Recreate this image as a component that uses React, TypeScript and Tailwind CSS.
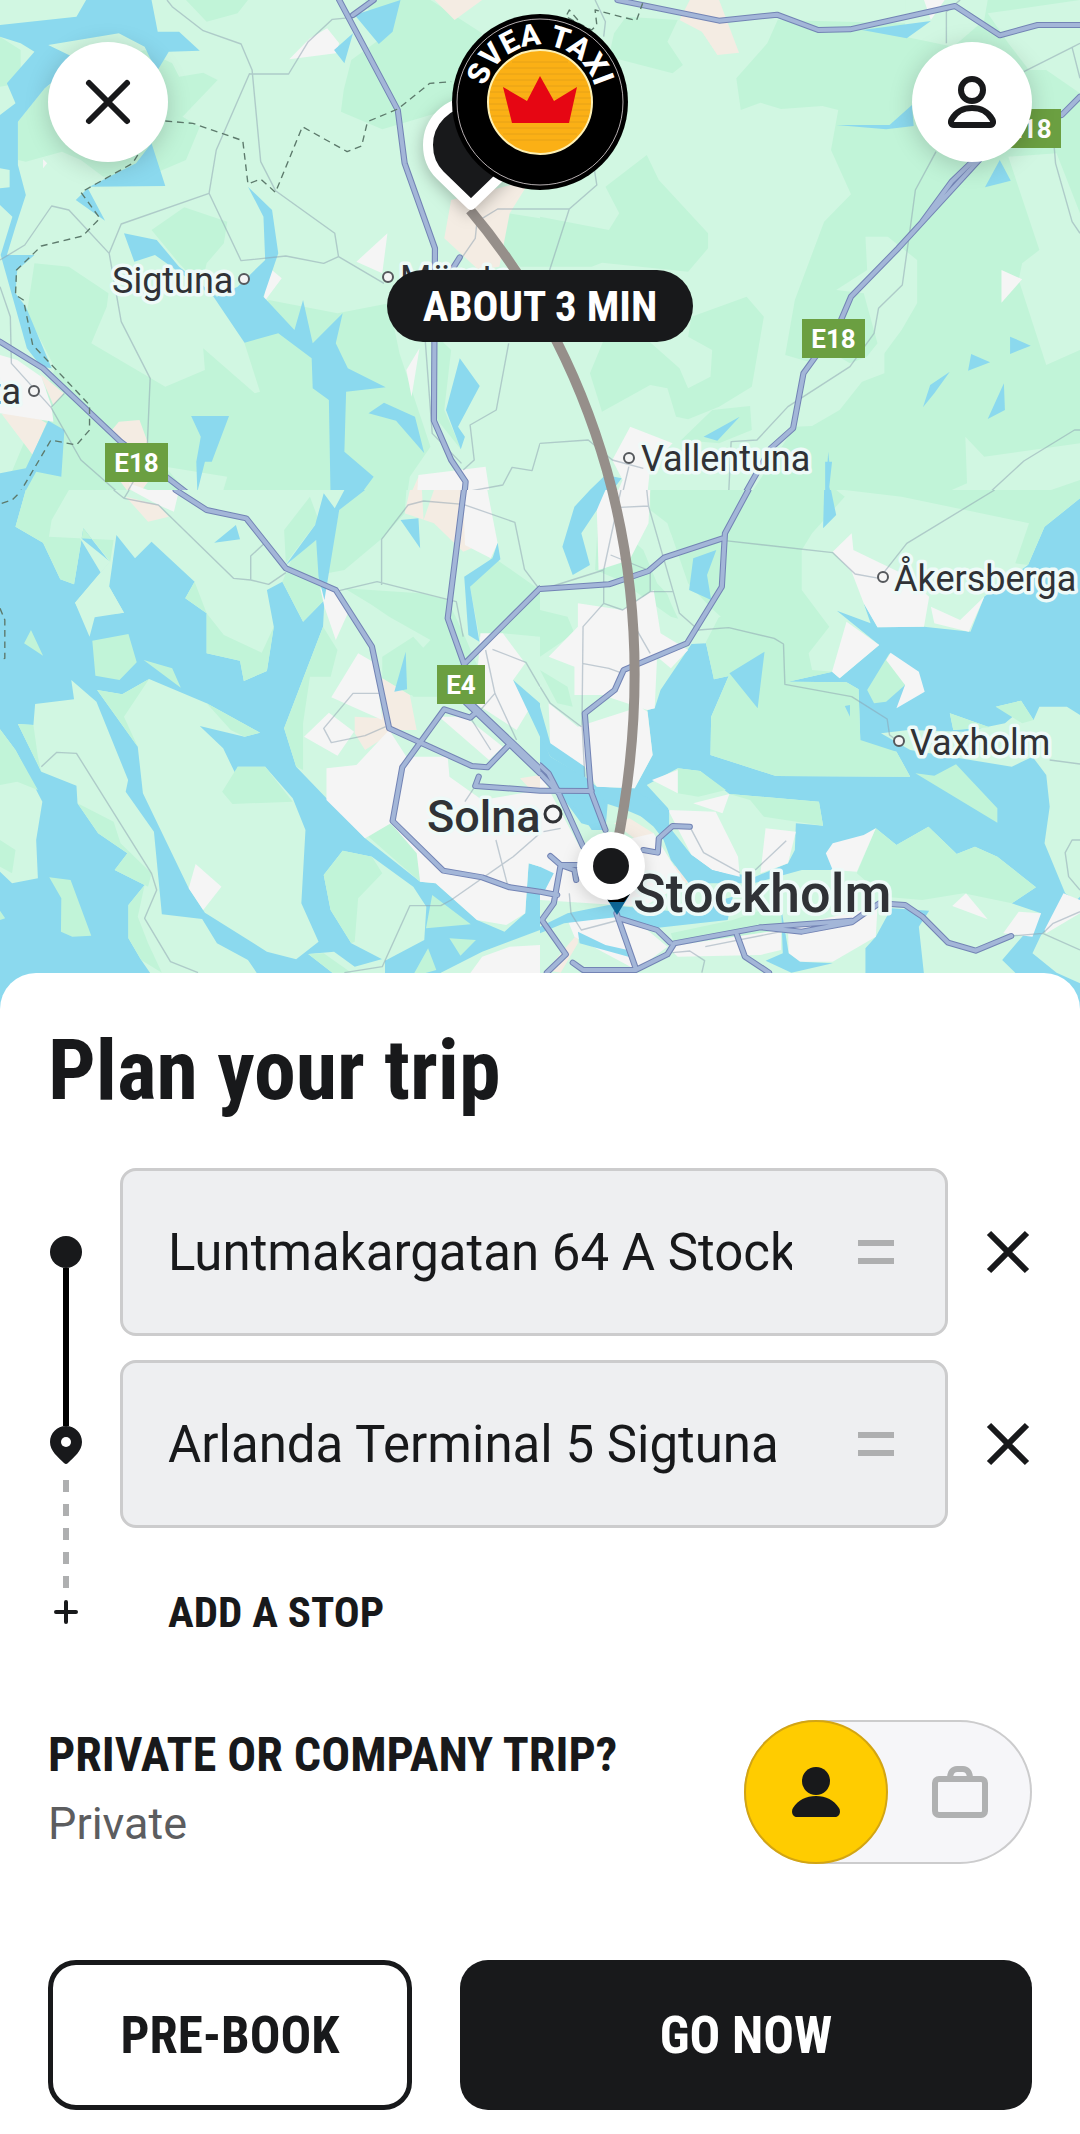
import { useState } from 'react'

type Tile = {
  x: number
  y: number
  base: string
  land?: string
  forest: string
  field?: string
  urban: string
  sand: string
  water: string
  minor: string
  major: string
  border?: string
}

const colors = {
  water: '#8bd9ee',
  land: '#d1f7e2',
  forest: '#c1f4d8',
  urban: '#f5f5f5',
  sand: '#f4ece3',
  road: '#a3b6d8',
  roadEdge: '#7384b5',
}

// Every tile is 540x500 on the map and has its own 1568x1500 grid
const tiles: Tile[] = [
  {
    x: 0,
    y: 0,
    base: colors.land,
    forest:
      'M52 365L130 265L200 220L420 150L500 190L520 230L590 218L632 240L530 350L580 380L540 480L450 520L300 530L235 480L180 455L75 485L52 480Z M0 110L60 150L60 250L0 260Z M540 0L720 0L690 40L600 65Z M1060 0L1250 0L1400 100L1330 320L1110 388L990 335L998 270L1020 180L1100 120Z M440 690L535 622L660 665L650 730L600 790L585 860L520 790Z M100 790L200 800L315 880L310 920L265 1030L480 1160L595 1110L590 1045L740 1180L755 1175L710 1030L780 900L980 940L1130 910L1160 1060L1250 1340L1190 1430L1180 1500L640 1500L660 1430L740 1390L720 1290L780 1238L870 1295L930 1295L955 1410L900 1500L0 1500L160 1105L78 940Z M1475 640L1568 655L1568 800L1510 800L1460 740Z M1270 1010L1310 1050L1290 1230L1340 1350L1270 1260Z',
    field: 'M480 1400L660 1430L640 1500L560 1500Z',
    urban:
      'M840 178L900 115L950 85L985 130L975 160Z M1125 700L1110 820L1035 785Z M778 800L818 835L765 908Z M1218 1045L1195 1190L1180 1110Z M0 1065L50 1080L120 1130L150 1220L155 1265L0 1240Z M125 478L137 490L125 505Z M1215 1425L1410 1400L1425 1500L1210 1500Z M375 1450L510 1500L390 1500Z',
    sand: 'M5 1242L75 1230L135 1270L95 1365Z M115 1120L185 1180L155 1215Z M325 1290L345 1265L405 1260L430 1330L340 1330Z M350 1445L430 1445L390 1500Z M1310 600L1540 540L1480 640L1450 800L1390 810L1290 715Z M1185 1500L1215 1430L1300 1430L1230 1500Z M1262 0L1320 60L1400 0Z',
    water:
      'M0 75L222 50L250 0L440 0L458 95L520 95L580 152L490 155L455 215L420 140L345 100L140 135L230 180L130 265L52 365L52 495L75 585L45 680L20 765L100 765L50 810L45 880L75 920L150 1105L120 1100L78 1045L2 765L36 650L0 615L0 565L28 562L28 510L0 505L0 345L45 310L20 250L100 155L60 130L0 110Z M440 430L480 558L260 560L395 490Z M220 600L255 565L305 662Z M360 700L455 720L520 800L630 890L690 860L770 780L765 650L720 560L790 630L808 760L765 890L855 990L880 900L908 1030L995 940L975 1030L1010 1105L1120 1162L1005 1175L1000 1355L1085 1430L1035 1500L960 1500L955 1200L908 1165L905 1075L808 1000L710 1028L620 890L450 765L390 785Z M555 1248L665 1248L615 1385L595 1385L573 1475L570 1385L583 1310Z M1335 1075L1393 1158L1330 1280L1350 1310L1338 1348L1295 1230Z M1070 1240L1115 1208L1205 1250L1232 1360L1150 1262Z M140 1262L187 1290L178 1430L105 1415L60 1500L0 1500L0 1420L75 1405Z M1030 45L1163 0L1140 95L1100 132Z M1025 100L1000 190L970 150Z',
    minor:
      'M485 0L500 20L590 92L700 132L732 210L757 485L800 572L972 700L983 770L1115 850 M725 222L838 222L895 125L965 58L1025 52 M725 220L628 450L607 580L352 672L317 760L200 630L150 618L72 735L0 780 M607 580L700 782L830 768L940 790L983 770 M317 760L352 965L436 1135L428 1330 M0 860L30 950L33 1090L148 1222L235 1380L360 1493L390 1440 M148 1222L187 1180 M1568 627L1445 627L1385 665L1380 715L1340 775 M1477 1030L1441 1230L1365 1275L1377 1380L1345 1410 M1568 1330L1545 1412L1487 1402L1460 1455L1355 1475 M1235 1025L1255 1300L1340 1390',
    major: 'M985 0L1155 330L1175 490L1263 745L1260 1262L1310 1380L1352 1445L1347 1500 M0 1025L125 1105L350 1325L570 1500 M1025 45L1085 0 M1335 772L1300 830',
    border:
      'M480 363L560 370L705 422L720 552L757 537L800 577L878 380L1008 455L1050 438L1067 365L1155 327L1248 250L1310 245 M400 465L385 490L235 577L290 655L240 708L120 738L48 810L45 885L68 900L95 1035L260 1215L260 1290L222 1335L148 1320L45 1500',
  },
  {
    x: 540,
    y: 0,
    base: colors.land,
    forest:
      'M250 50L400 60L370 125L415 195L385 220L200 170L215 100Z M690 60L1060 70L1060 0L1568 0L1568 1500L600 1500L740 1280L790 1278L870 1230L935 1145L1000 1120L1000 1050L900 1090L850 1060L780 1085L712 1065L740 900L825 665L903 583L845 450L866 330L820 318L700 327L640 308L583 330L570 235L660 130Z M310 465L190 560L230 640L200 690L0 650L0 800L150 800L180 788L430 815L488 745L488 700L345 540Z M600 890L650 950L615 1160L520 1220L430 1258L395 1250L370 1165L320 1155L180 1235L145 1120L185 1020L290 1000L405 1105L430 1165L495 1130L500 1050L430 1010L440 950Z M410 1320L500 1230L610 1218L615 1290L520 1330Z',
    field:
      'M1300 40L1568 0L1568 280L1470 210L1420 210L1360 130Z M1060 0L1300 0L1290 60L1200 140L1060 110Z M1360 470L1450 750L1400 790L1390 840L1470 1095L1568 1050L1568 640L1500 460Z M945 710L1010 710L1095 780L1095 910L1050 990L1000 1060L935 1145L880 1160L980 1030L940 880L860 870L950 810Z M1235 1310L1290 1370L1568 1330L1568 1440L1400 1500L1130 1500L1240 1450Z M860 1500L1000 1470L1040 1500Z',
    urban: 'M262 1280L385 1330L320 1400L310 1500L215 1500L240 1440L210 1380Z M1340 810L1400 838L1340 908Z M1115 0L1175 0L1135 60Z',
    sand: 'M435 0L520 0L578 158L515 165L470 95L405 60Z',
    water:
      'M935 90L1135 63L1065 115Z M860 375L1015 375L1080 315L1085 378L1005 388Z M1335 480L1367 542L1292 562Z M1365 1010L1425 1037L1365 1062Z M1252 1062L1307 1087L1243 1112Z M1190 1115L1145 1180L1112 1222L1133 1155Z M1347 1150L1350 1230L1300 1257Z M475 1310L580 1250L515 1322Z M115 1500L190 1425L237 1435L190 1500Z M837 1355L840 1385L848 1385L840 1460L848 1500L828 1500L828 1385L835 1385Z',
    minor:
      'M160 0L190 65L185 110 M0 627L85 627L165 555L158 510 M85 627L28 810 M1150 455L1090 570L1073 700L1052 855L983 925L970 1000L900 1100L720 1220L630 1320L555 1325L547 1500 M1220 0L1180 35V130 M1405 215L1545 142L1568 130 M1545 142L1568 235 M1493 440L1497 490L1545 665L1568 700 M0 1330L140 1320L210 1380L300 1405 M258 1400L235 1500 M1568 1290L1552 1290L1405 1383L1308 1475L1270 1500',
    major:
      'M225 0L520 62L688 44L808 90L900 88L1205 18L1335 106L1445 75L1568 75 M1568 290L1515 345 M1275 480L1040 745L903 890L870 970L765 1120L735 1285L670 1345L585 1500 M1260 480L1195 545L1110 665',
    border: 'M110 60L85 30L75 50L150 90L165 75L160 30L280 62L298 10',
  },
  {
    x: 0,
    y: 490,
    base: colors.water,
    land: 'M75 0L45 110L125 158L175 268L215 283L242 115L318 215L218 338L260 440L275 382L360 368L317 290L338 135L392 205L440 155L565 275L538 325L600 370L600 490L697 512L708 573L775 543L795 410L775 300L820 275L880 395L942 330L938 410L825 715L860 830L1060 1045L1220 1175L1265 1180L1385 1290L1465 1325L1525 1270L1535 1120L1568 1130L1568 0Z M282 600L355 613L433 567L600 640L755 728L710 740L580 708L648 775L690 865L690 830L770 830L850 925L887 1020L875 1240L925 1355L860 1408L775 1385L595 1268L548 1195L415 910L400 770Z M207 570L280 635L372 870L365 905L447 1025L470 1273L587 1287L630 1360L720 1410L745 1448V1500H470L410 1410L373 1345L373 1245L420 1185L333 1140L370 1090L285 1030L225 940L222 887L120 845L52 702L97 705L102 642L215 628Z M0 718L45 780L123 935L105 1050L110 1165L35 1180L0 1145Z M940 1155L995 1082L1080 1100L1200 1190L1238 1250L1232 1350L1118 1412L1020 1360L960 1260Z M895 1392L970 1385L1030 1430L1118 1405L1118 1500L1000 1500L965 1448Z M1280 1448L1400 1385L1568 1320V1500H1280Z',
    forest:
      'M75 0L200 0L150 90L142 140L330 150L320 215L242 115L215 283L175 268L125 158L45 110Z M1050 0L1180 0L1175 70L1110 145L1000 240L950 250L985 60Z M918 150L942 330L880 395L820 275L850 200Z M900 20L925 90L830 220L825 120Z M1000 295L1220 310L1300 330L1350 440L1400 560L1280 620L1200 620L1150 560L1250 450L1130 380L1080 345Z M1110 500L1200 440L1270 520L1270 620L1190 615L1110 565Z M1365 290L1430 200L1568 300L1568 440L1460 430L1392 440Z M938 410L980 480L960 560L900 560L880 700L880 840L860 830L825 715Z M690 830L770 830L850 935L675 942L645 905Z M538 325L565 275L600 370L650 435L760 488L795 410L775 543L708 573L697 512L600 490L600 370Z M282 600L355 613L433 567L360 680L400 770Z M600 640L755 728L710 740L670 720Z M940 1155L995 1082L1080 1100L1110 1150L1040 1225L1030 1355L1020 1360L960 1260Z M420 1185L400 1280L430 1360L470 1448L410 1410L373 1345L373 1245Z M225 940L330 995L350 1060L440 1150L430 1190L333 1140L370 1090L285 1030Z M0 718L45 780L110 900L50 875L0 885Z M0 1050L45 1080L35 1150L0 1130Z M52 702L97 705L110 800L120 845Z M70 460L90 420L125 497Z M268 452L373 432L397 517L347 570L277 557Z M417 510L500 535L525 593Z M143 1162L205 1170L265 1337L210 1340L177 1325L178 1225Z M0 1262L15 1285L0 1290Z M1255 1215L1367 1303L1237 1315Z M1305 1345L1382 1350L1337 1397Z M1243 1375L1267 1440L1197 1460Z M895 1392L940 1390L1020 1448L965 1448Z M1070 1040L1130 1000L1215 1080L1220 1175Z',
    field: 'M230 140L320 215L218 338L240 380L360 368L317 290Z',
    urban:
      'M380 0L520 0L505 65L460 45Z M1345 0L1415 0L1445 160L1425 205L1350 165Z M930 295L985 295L1010 370L975 450L942 350Z M1040 490L1090 520L1110 690L962 622Z M955 668L1028 725L980 797L883 740Z M948 835L1035 825L1130 720L1180 800L1300 800L1305 860L1400 930L1568 900L1568 1130L1535 1120L1525 1270L1470 1305L1385 1290L1265 1180L1220 1175L1210 1090L1135 1000L1060 1045L948 930Z M1275 680L1350 680L1460 770L1420 810Z M1395 430L1460 430L1525 520L1490 570L1535 660L1500 720L1380 640Z M548 1195L568 1122L643 1190L590 1260Z M1568 1365V1500H1330L1400 1400L1480 1370Z',
    sand: 'M365 20L460 45L490 80L430 95Z M1190 0L1225 0L1230 90L1260 0L1350 0L1350 110L1380 170L1345 185L1310 150L1260 100L1175 70Z M1110 565L1190 615L1210 720L1150 720L1060 780L1030 730L1030 680L1110 685Z M1510 865L1568 855V930Z M1380 1030L1450 1060L1440 1115L1400 1090Z',
    water:
      'M940 10L972 55L1000 0L1060 0L985 60L942 330L925 260L918 150L830 225L915 105Z M1163 90L1215 85L1220 175Z M685 105L697 148L622 158Z M1178 485L1182 598L1145 605Z M1445 158L1453 208L1365 290L1392 455L1360 435L1348 260L1430 205Z M1490 570L1568 640V740Z',
    minor:
      'M330 0L360 25L460 45L678 265L728 270L780 283L830 248 M728 270V198L768 160 M360 25L375 0 M985 302L1095 275L1325 335L1345 440 M1108 285V148L1185 45L1230 33L1345 43L1495 97L1523 238L1568 300 M120 830L165 787L222 790L440 1150L455 1200L420 1285L495 1415L575 1448 M1100 610H1025L940 715L962 758L1060 737L1120 710 M1410 480L1437 610L1500 750 M1430 478L1527 517L1568 590 M1437 610L1370 690L1425 780 M1350 935L1380 888 M1440 1050L1475 1190 M1568 1030L1490 1100L1310 1230L1280 1247L1190 1247L1110 1430L1000 1448',
    major:
      'M510 0L600 60L715 85L830 235L975 300L1080 470L1130 715L1370 828L1415 832L1475 768 M1347 0L1300 385L1350 530 M1345 630L1568 850 M1345 618L1568 836 M1568 295L1350 520 M1385 665L1365 683L1290 658L1168 832L1140 993L1287 1142L1400 1162L1480 1192L1568 1205 M1390 860L1380 888L1568 902',
    border: 'M5 40L35 30L60 5 M0 355L14 390V505L0 508',
  },
  {
    x: 540,
    y: 490,
    base: colors.water,
    land: 'M0 0L1568 0L1568 25L1465 110L1417 225L1290 320L1250 425L1115 410L980 412L940 340L960 400L862 362L985 465L870 565L848 545L720 575L890 577L925 598L930 750L900 755L900 768L1035 785L1075 860L685 858L495 795L497 680L548 558L505 568L482 460L440 462L350 600L333 655L312 660L327 795L275 895L165 890L130 860L30 800L0 730Z M310 885L400 835L465 843L550 912L810 935L822 1007L743 1000L740 1080L720 1120L625 1160L500 1140L440 1095L375 1010L372 955Z M0 820L50 900L120 1000L190 1020L200 900L330 1010L420 1130L460 1180L620 1180L760 1140L860 1140L975 1015L1035 1065L1128 1010L1210 1092L1263 1070L1328 1100L1440 1192L1370 1240L1455 1270L1400 1340L1342 1410L1380 1448V1500H1120L1100 1310L1130 1262L1020 1255L975 1340L945 1375V1500H0Z M1190 670L1305 712L1200 720Z M1323 650L1397 632L1433 690L1450 650L1530 650L1568 675V1240L1525 1210L1465 1060L1480 950L1470 855L1430 800L1370 830L1250 810L1075 780L990 730L1070 720L1230 725L1350 700L1390 665Z M1568 1220L1455 1335L1430 1390L1500 1448L1568 1480Z',
    forest:
      'M320 0L860 0L885 20L790 130L760 180L760 300L840 410L780 490L790 540L850 545L720 575L890 577L925 598L930 750L1035 785L1075 860L685 858L495 795L497 680L548 558L505 568L482 460L470 400L525 380L430 290L370 100L320 60Z M950 600L1015 490L1060 585L1005 635L970 640Z M975 1015L1035 1065L1128 1010L1210 1092L1263 1070L1328 1100L1440 1192L1370 1240L1230 1210L1110 1230L1000 1220L920 1150Z M885 0L1568 0L1568 25L1465 110L1417 225L1380 220L1420 100L1050 20Z M0 360L80 380L100 430L0 500Z M0 540L80 590L95 650L50 640Z M1090 850L1145 857L1208 823L1328 955V998Z M1190 670L1305 712L1200 720Z M1323 650L1397 632L1433 690L1400 700Z M550 912L810 935L822 1007L650 980L610 930Z M400 835L465 843L540 900L460 920L400 910Z M170 60L160 240L230 270L380 380L450 400L340 280L300 180Z M380 1330L560 1290L700 1240L700 1320L390 1365Z',
    field: 'M380 130L430 280L520 380L480 460L430 450L380 340L320 180Z M1130 310L1290 320L1220 390L1135 340Z',
    urban:
      'M180 0L320 0L315 100L260 210L170 240L165 60Z M110 340L240 360L330 300L350 430L430 480L380 535L340 500L333 655L312 660L180 615L100 615L100 530L25 500L110 410Z M25 640L110 710L290 650L312 665L327 795L275 895L165 890L130 830L30 770Z M905 130L910 180L970 210L1050 250L1130 320L1115 410L980 412L940 340L905 245L850 185Z M890 395L985 465L870 565L848 545Z M1290 320L1245 425L1145 400L1135 350L1220 390Z M1018 488L1100 545L1117 605L1035 655L1060 585L1005 510Z M400 840V910L325 870Z M445 940L550 912L530 970Z M372 960L510 965L575 1100L580 1160L500 1140L440 1095Z M655 1015L743 1025L720 1120L640 1150Z M975 1015L920 1145L850 1140L830 1090L850 1060L940 1035Z M0 850L120 1080L330 1030L420 1180L300 1250L0 1230Z M80 1290L230 1280L300 1310L370 1370L280 1440L100 1340Z M370 1370L700 1320L700 1380L640 1395L400 1400Z M720 1310L980 1250L975 1340L850 1415L755 1415L722 1390Z M1237 1210L1300 1288L1197 1248Z M1390 1265L1455 1270L1430 1340L1345 1330Z M1520 1210L1568 1230V1270L1470 1330L1465 1320Z',
    sand: 'M215 1000L260 985L330 1030L320 1080Z M20 1050L80 1040L100 1090L0 1090Z M300 1140L420 1125L430 1180L340 1180Z M20 1440L110 1330L110 1360L60 1448Z',
    water:
      'M145 0L190 0L165 60L120 130L145 225L95 255L65 170L100 50Z M445 205L512 180L485 255L497 330L433 300Z M825 0H845L860 75L822 115Z M550 550L652 485L632 655Z M885 648L900 645V680Z M0 650L30 760L130 830L132 865L30 800L0 740Z M60 915L155 930L190 1020L150 1020L120 970Z M160 890L270 900L375 960L375 1010L340 1000L250 960L190 940Z M345 1010L440 1095L500 1140L570 1160L440 1190L380 1110Z M0 1310L80 1270L200 1245L400 1265L560 1220L545 1290L330 1315L230 1280L70 1300L0 1330Z M700 1250L722 1390L755 1415L850 1420L730 1448L655 1412L705 1390Z M110 1325L190 1365L255 1380L262 1402L115 1360Z M0 1130L40 1150L10 1210L0 1210Z',
    minor:
      'M235 0L185 240L10 297 M310 0L315 48L232 52 M315 48L405 370L460 420L548 413L680 445L707 462L711 583L905 620L1008 687L1015 735L1035 750 M537 152L850 188L915 252L985 265L1065 160L1320 0 M185 240V340L125 410L122 700L130 860 M185 340L240 360L320 305H385 M205 195L320 243V305 M122 520L200 535L240 550 M0 590L30 640L120 710 M1568 822L1480 810 M435 1010L475 1088L580 1148 M715 1052L625 1140 M1568 1050H1545L1525 1088L1535 1160L1568 1200 M1368 1338L1460 1330L1568 1380 M1460 1330L1490 1300L1568 1265 M85 1210L90 1270L120 1320L230 1290 M385 1388L435 1383L478 1412L470 1448 M480 1370L700 1325 M10 1025L60 1015 M270 400L320 490',
    major:
      'M605 0L537 130L528 290L427 460L243 540L217 600L130 670L148 905L190 1020 M530 145L360 203L315 243L200 283L0 297 M0 902L150 903 M0 850L55 910L125 1070 M0 826L25 850L55 910 M300 1080L342 1088L345 1045L385 1008L435 1010 M30 1098L60 1125H115 M60 1125L40 1240L5 1290L75 1393L20 1448 M0 1205L50 1215 M60 1125L100 1140L105 1170 M222 1270L278 1435 M230 1285L340 1320L378 1358 M95 1418L125 1440L278 1440L370 1393L390 1360L640 1312L760 1325L905 1297L935 1275L985 1240L1060 1245L1110 1280L1185 1358L1265 1382L1368 1338 M640 1312L905 1292 M572 1335L595 1400L665 1448',
  },
]

const places = [
  { name: 'Sigtuna', x: 112, y: 293, dotX: 244, dotY: 279 },
  { name: 'Märsta', x: 400, y: 291, dotX: 388, dotY: 277 },
  { name: 'Vallentuna', x: 641, y: 471, dotX: 629, dotY: 458 },
  { name: 'Åkersberga', x: 894, y: 591, dotX: 883, dotY: 577 },
  { name: 'Vaxholm', x: 910, y: 755, dotX: 899, dotY: 741 },
]

const shields = [
  { name: 'E18', x: 105, y: 443, w: 63 },
  { name: 'E18', x: 802, y: 319, w: 63 },
  { name: 'E18', x: 998, y: 109, w: 63 },
  { name: 'E4', x: 437, y: 665, w: 48 },
]

const condensed = "font-['Roboto_Condensed','Liberation_Sans_Narrow',Roboto,sans-serif]"

function MapTile({ tile }: { tile: Tile }) {
  return (
    <svg x={tile.x} y={tile.y} width={540} height={500} viewBox="0 0 1568 1500" preserveAspectRatio="none">
      <rect width="1568" height="1500" fill={tile.base} />
      {tile.land && <path d={tile.land} fill={colors.land} />}
      <path d={tile.forest} fill={colors.forest} />
      {tile.field && <path d={tile.field} fill={colors.land} />}
      <path d={tile.sand} fill={colors.sand} />
      <path d={tile.urban} fill={colors.urban} />
      <path d={tile.water} fill={colors.water} />
      <g fill="none" strokeLinejoin="round">
        <path d={tile.minor} stroke="#8c9fb0" strokeOpacity="0.5" strokeWidth="4" />
        <path d={tile.major} stroke={colors.roadEdge} strokeWidth="18" strokeLinecap="round" />
        <path d={tile.major} stroke={colors.road} strokeWidth="12" strokeLinecap="round" />
        {tile.border && <path d={tile.border} stroke="#5d7a6c" strokeWidth="4" strokeDasharray="20 14" />}
      </g>
    </svg>
  )
}

function TripMap() {
  return (
    <svg viewBox="0 0 1080 1013" className="block w-full font-[Roboto,sans-serif]" role="img" aria-label="Map of the trip">
      <rect width="1080" height="1013" fill={colors.water} />
      {tiles.map((tile) => (
        <MapTile key={`${tile.x}-${tile.y}`} tile={tile} />
      ))}

      {shields.map((shield) => (
        <g key={`${shield.x}-${shield.y}`}>
          <rect x={shield.x} y={shield.y} width={shield.w} height={39} fill="#6b9f41" />
          <text x={shield.x + shield.w / 2} y={shield.y + 29} textAnchor="middle" fontSize="26" fontWeight="700" fill="#fff">
            {shield.name}
          </text>
        </g>
      ))}

      <g fontSize="36" fill="#303236" stroke="#eefaf8" strokeWidth="7" strokeLinejoin="round" style={{ paintOrder: 'stroke' }}>
        <text x="21" y="404" textAnchor="end">Bålsta</text>
        {places.map((place) => (
          <text key={place.name} x={place.x} y={place.y}>{place.name}</text>
        ))}
        <text x="427" y="832" fontSize="45" fontWeight="500">Solna</text>
        <text x="633" y="912" fontSize="54" fontWeight="500">Stockholm</text>
      </g>
      <g fill="#f5f5f5" stroke="#55585c" strokeWidth="2">
        <circle cx="34" cy="391" r="5" />
        {places.map((place) => (
          <circle key={place.name} cx={place.dotX} cy={place.dotY} r="5" />
        ))}
        <circle cx="553" cy="814" r="8" stroke="#303236" strokeWidth="3" />
      </g>

      <path d="M470 210C580 340 676 560 616 850" fill="none" stroke="#968f8a" strokeWidth="10" />

      <g className="drop-shadow-[0_4px_8px_rgba(0,0,0,0.25)]">
        <path
          d="M471 205L440 175C432 167 428 157 428 145A43 43 0 0 1 514 145C514 157 510 167 502 175Z"
          fill="#18191b"
          stroke="#fff"
          strokeWidth="10"
          strokeLinejoin="round"
        />
      </g>
      <path d="M604 894L617 915L630 894Z" fill="#0d6a9c" />
      <path d="M604 894L609 902H624L630 894Z" fill="#000" />
      <g className="drop-shadow-[0_4px_8px_rgba(0,0,0,0.15)]">
        <circle cx="611" cy="866" r="34" fill="#fff" />
      </g>
      <circle cx="611" cy="866" r="18" fill="#18191b" />
    </svg>
  )
}

function Logo() {
  return (
    <svg viewBox="0 0 176 176" className="size-44" role="img" aria-label="Svea Taxi">
      <circle cx="88" cy="88" r="88" fill="#000" />
      <circle cx="88" cy="88" r="83" fill="none" stroke="#b5aeb0" strokeWidth="1" />
      <circle cx="88" cy="88" r="52" fill="#fbb015" stroke="#fdf0b4" strokeWidth="2" />
      <g stroke="#d99a1b" strokeWidth="1" fill="none">
        <path d="M60 48H116M52 54H124M47 60H129M43 66H133M40 72H136M38 78H138M37 84H139M37 90H139M38 96H138M39 102H137M42 108H134M46 114H130M51 120H125M58 126H118" strokeOpacity="0.6" />
      </g>
      <path d="M51 73L75 87L88 62L102 87L125 73L117 109H60Z" fill="#e60613" />
      <path id="logo-arc" d="M31 88A57 57 0 0 1 145 88" fill="none" />
      <text className="font-[Roboto,sans-serif]" fontSize="30" fontWeight="800" fill="#fff" textAnchor="middle">
        <textPath href="#logo-arc" startOffset="50%">SVEA TAXI</textPath>
      </text>
    </svg>
  )
}

function CrossIcon({ className }: { className: string }) {
  return (
    <svg viewBox="0 0 48 48" className={className} aria-hidden="true">
      <path d="M5 5L43 43M43 5L5 43" stroke="#18191b" strokeWidth="6" strokeLinecap="round" />
    </svg>
  )
}

function ClearIcon() {
  return (
    <svg viewBox="0 0 48 48" className="size-12" aria-hidden="true">
      <path d="M5 5L43 43M43 5L5 43" stroke="#18191b" strokeWidth="6" />
    </svg>
  )
}

function PersonOutline() {
  return (
    <svg viewBox="0 0 48 52" className="h-13 w-12" fill="none" stroke="#18191b" strokeWidth="6" aria-hidden="true">
      <circle cx="24" cy="14" r="11" />
      <path d="M6 49H42C45 49 46 46 44 43C40 36 33 32 24 32S8 36 4 43C2 46 3 49 6 49Z" strokeLinejoin="round" />
    </svg>
  )
}

function PersonFilled() {
  return (
    <svg viewBox="0 0 48 52" className="h-13 w-12" fill="#18191b" aria-hidden="true">
      <circle cx="24" cy="15" r="14" />
      <path d="M5 51C0 51-1 45 1 42C6 34 14 30 24 30S42 34 47 42C49 45 48 51 43 51Z" />
    </svg>
  )
}

function Briefcase() {
  return (
    <svg viewBox="0 0 56 52" className="h-13 w-14" fill="none" stroke="#b0b1b2" strokeWidth="6" aria-hidden="true">
      <rect x="3" y="13" width="50" height="36" rx="4" />
      <path d="M18 13C18 6 21 3 25 3H31C35 3 38 6 38 13" />
    </svg>
  )
}

function Rail() {
  return (
    <div className="flex w-9 shrink-0 flex-col items-center pt-[68px]">
      <div className="size-8 rounded-full bg-[#18191b]" />
      <div className="h-[158px] w-1.5 bg-black" />
      <svg viewBox="0 0 32 38" className="h-[38px] w-8" aria-hidden="true">
        <path d="M16 0C25 0 32 7 32 16C32 25 24 31 18 37Q16 39 14 37C8 31 0 25 0 16C0 7 7 0 16 0Z" fill="#18191b" />
        <circle cx="16" cy="16" r="5" fill="#fff" />
      </svg>
      <div className="mt-4 flex flex-col gap-3">
        {[0, 1, 2, 3, 4].map((dash) => (
          <div key={dash} className="h-3 w-1.5 bg-[#aeafb0]" />
        ))}
      </div>
      <svg viewBox="0 0 24 24" className="mt-3 size-6" aria-hidden="true">
        <path d="M12 2V22M2 12H22" stroke="#18191b" strokeWidth="4" strokeLinecap="round" />
      </svg>
    </div>
  )
}

type StopFieldProps = {
  id: string
  label: string
  value: string
  onChange: (value: string) => void
}

function StopField({ id, label, value, onChange }: StopFieldProps) {
  return (
    <div className="flex items-center gap-9">
      <div className="flex h-42 min-w-0 flex-1 items-center gap-[66px] rounded-2xl border-3 border-[#cccccd] bg-[#eeeff1] pr-[51px] pl-[45px]">
        <label htmlFor={id} className="sr-only">{label}</label>
        <input
          id={id}
          type="text"
          value={value}
          onChange={(e) => onChange(e.target.value)}
          className="min-w-0 flex-1 bg-transparent pt-0.5 text-[51px] leading-[64px] text-[#18191b] outline-none"
        />
        <div className="flex shrink-0 flex-col gap-3">
          <div className="h-1.5 w-9 bg-[#aeafb0]" />
          <div className="h-1.5 w-9 bg-[#aeafb0]" />
        </div>
      </div>
      <button type="button" aria-label={`Clear ${label}`} onClick={() => onChange('')}>
        <ClearIcon />
      </button>
    </div>
  )
}

export default function App() {
  const [from, setFrom] = useState('Luntmakargatan 64 A Stockholm')
  const [to, setTo] = useState('Arlanda Terminal 5 Sigtuna')
  const [tripType, setTripType] = useState('Private')

  return (
    <main className="min-h-screen bg-white font-[Roboto,sans-serif] text-[#18191b]">
      <section className="relative">
        <TripMap />
        <div className="absolute inset-x-0 top-0 px-12 pt-3.5">
          <div className="flex items-center justify-between">
            <button type="button" aria-label="Close" className="flex size-30 items-center justify-center rounded-full bg-white shadow-[0_4px_24px_rgba(0,0,0,0.18)]">
              <CrossIcon className="size-12" />
            </button>
            <Logo />
            <button type="button" aria-label="Profile" className="flex size-30 items-center justify-center rounded-full bg-white shadow-[0_4px_24px_rgba(0,0,0,0.18)]">
              <PersonOutline />
            </button>
          </div>
          <div className="mt-20 flex justify-center">
            <p className={`${condensed} flex h-18 items-center rounded-full bg-[#18191b] px-9 text-[43px] font-bold text-white`}>
              ABOUT 3 MIN
            </p>
          </div>
        </div>
      </section>

      <section className="relative -mt-10 rounded-t-[36px] bg-white px-12 pt-[50px] pb-6">
        <h1 className={`${condensed} text-[84px] leading-[96px] font-bold`}>Plan your trip</h1>

        <div className="mt-[49px] flex gap-9">
          <Rail />
          <div className="min-w-0 flex-1">
            <div className="flex flex-col gap-6">
              <StopField id="from" label="Pickup address" value={from} onChange={setFrom} />
              <StopField id="to" label="Destination" value={to} onChange={setTo} />
            </div>
            <button type="button" className={`${condensed} mt-[60px] block pl-12 text-[43px] leading-[48px] font-bold`}>
              ADD A STOP
            </button>
          </div>
        </div>

        <div className="mt-[84px] flex items-center justify-between">
          <div className="pb-1.5">
            <h2 id="trip-type" className={`${condensed} text-[48px] leading-[69px] font-bold`}>PRIVATE OR COMPANY TRIP?</h2>
            <p className="text-[45px] leading-[69px] text-[#5c5d5f]">{tripType}</p>
          </div>
          <div role="radiogroup" aria-labelledby="trip-type" className="flex rounded-full bg-[#f6f6f9] shadow-[inset_0_0_0_2px_#cccccd]">
            <label className="flex size-36 items-center justify-center rounded-full has-checked:border-2 has-checked:border-[#d3a512] has-checked:bg-[#ffcc00]">
              <input type="radio" name="trip" className="sr-only" aria-label="Private" checked={tripType === 'Private'} onChange={() => setTripType('Private')} />
              <PersonFilled />
            </label>
            <label className="flex size-36 items-center justify-center rounded-full has-checked:border-2 has-checked:border-[#d3a512] has-checked:bg-[#ffcc00]">
              <input type="radio" name="trip" className="sr-only" aria-label="Company" checked={tripType === 'Company'} onChange={() => setTripType('Company')} />
              <Briefcase />
            </label>
          </div>
        </div>

        <div className={`${condensed} mt-24 grid grid-cols-[7fr_11fr] gap-12 text-[51px] font-bold`}>
          <button type="button" className="h-[150px] rounded-[28px] border-5 border-[#18191b] pt-0.5">PRE-BOOK</button>
          <button type="button" className="h-[150px] rounded-[28px] bg-[#18191b] pt-0.5 text-white">GO NOW</button>
        </div>
      </section>
    </main>
  )
}
